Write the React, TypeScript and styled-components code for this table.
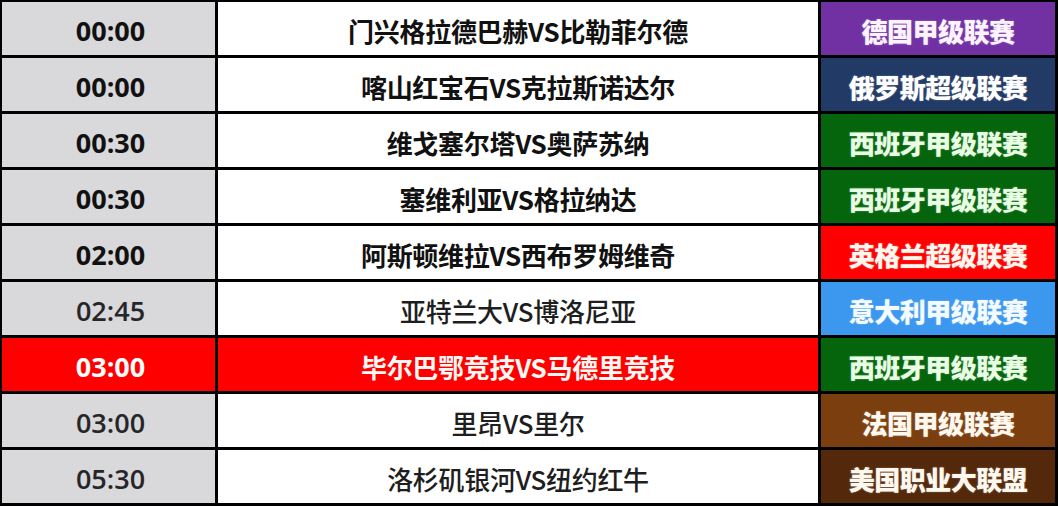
import React from "react";
import styled, { createGlobalStyle } from "styled-components";

const GlobalStyle = createGlobalStyle`
  html, body {
    margin: 0;
    padding: 0;
    background: #ffffff;
  }
`;

type League = "de" | "ru" | "es" | "en" | "it" | "fr" | "us";

const leagueColors: Record<League, { bg: string; fg: string }> = {
  de: { bg: "#7231a3", fg: "#fbf4ff" },
  ru: { bg: "#213a66", fg: "#ffffff" },
  es: { bg: "#05650d", fg: "#e9ffe4" },
  en: { bg: "#ff0000", fg: "#fff6ee" },
  it: { bg: "#3c97ef", fg: "#f4fbff" },
  fr: { bg: "#7b3e0f", fg: "#fff8ee" },
  us: { bg: "#54290b", fg: "#fff8ee" },
};

const matches: {
  time: string;
  teams: string;
  league: string;
  code: League;
  highlight?: boolean;
  light?: boolean;
}[] = [
  { time: "00:00", teams: "门兴格拉德巴赫VS比勒菲尔德", league: "德国甲级联赛", code: "de" },
  { time: "00:00", teams: "喀山红宝石VS克拉斯诺达尔", league: "俄罗斯超级联赛", code: "ru" },
  { time: "00:30", teams: "维戈塞尔塔VS奥萨苏纳", league: "西班牙甲级联赛", code: "es" },
  { time: "00:30", teams: "塞维利亚VS格拉纳达", league: "西班牙甲级联赛", code: "es" },
  { time: "02:00", teams: "阿斯顿维拉VS西布罗姆维奇", league: "英格兰超级联赛", code: "en" },
  { time: "02:45", teams: "亚特兰大VS博洛尼亚", league: "意大利甲级联赛", code: "it", light: true },
  { time: "03:00", teams: "毕尔巴鄂竞技VS马德里竞技", league: "西班牙甲级联赛", code: "es", highlight: true },
  { time: "03:00", teams: "里昂VS里尔", league: "法国甲级联赛", code: "fr", light: true },
  { time: "05:30", teams: "洛杉矶银河VS纽约红牛", league: "美国职业大联盟", code: "us", light: true },
];

const Table = styled.div`
  display: grid;
  grid-template-columns: 213px 600px 1fr;
  grid-auto-rows: 53px;
  gap: 3px;
  padding: 2px 3px 3px 2px;
  background: #000000;
  width: 1058px;
  height: 506px;
  box-sizing: border-box;
`;

const Cell = styled.div`
  display: flex;
  align-items: center;
  justify-content: center;
  padding-top: 3px;
  box-sizing: border-box;
`;

const TimeCell = styled(Cell)<{ $highlight?: boolean; $light?: boolean }>`
  background: ${({ $highlight }) => ($highlight ? "#ff0000" : "#d9d8da")};
  color: ${({ $highlight, $light }) =>
    $highlight ? "#ffffff" : $light ? "#262629" : "#111111"};
  font-family: "Open Sans", "Liberation Sans", sans-serif;
  font-weight: ${({ $light }) => ($light ? 600 : 700)};
  font-size: 27px;
  padding-left: 4px;
`;

const TeamsCell = styled(Cell)<{ $highlight?: boolean; $light?: boolean }>`
  background: ${({ $highlight }) => ($highlight ? "#ff0000" : "#ffffff")};
  color: ${({ $highlight, $light }) =>
    $highlight ? "#fff8f4" : $light ? "#1e1e1e" : "#111111"};
  font-family: "Noto Sans CJK SC", "Noto Sans", sans-serif;
  font-weight: ${({ $light }) => ($light ? 500 : 700)};
  font-size: 26px;
  letter-spacing: -0.3px;
`;

const LeagueCell = styled(Cell)<{ $code: League }>`
  background: ${({ $code }) => leagueColors[$code].bg};
  color: ${({ $code }) => leagueColors[$code].fg};
  font-family: "Noto Sans CJK SC", "Noto Sans", sans-serif;
  font-weight: 900;
  font-size: 26px;
  letter-spacing: -0.5px;
  text-shadow: 0 0 2px rgba(255, 255, 255, 0.35);
`;

export default function App() {
  return (
    <>
      <GlobalStyle />
      <Table>
        {matches.map((m, i) => (
          <React.Fragment key={i}>
            <TimeCell $highlight={m.highlight} $light={m.light}>
              {m.time}
            </TimeCell>
            <TeamsCell $highlight={m.highlight} $light={m.light}>
              {m.teams}
            </TeamsCell>
            <LeagueCell $code={m.code}>{m.league}</LeagueCell>
          </React.Fragment>
        ))}
      </Table>
    </>
  );
}
